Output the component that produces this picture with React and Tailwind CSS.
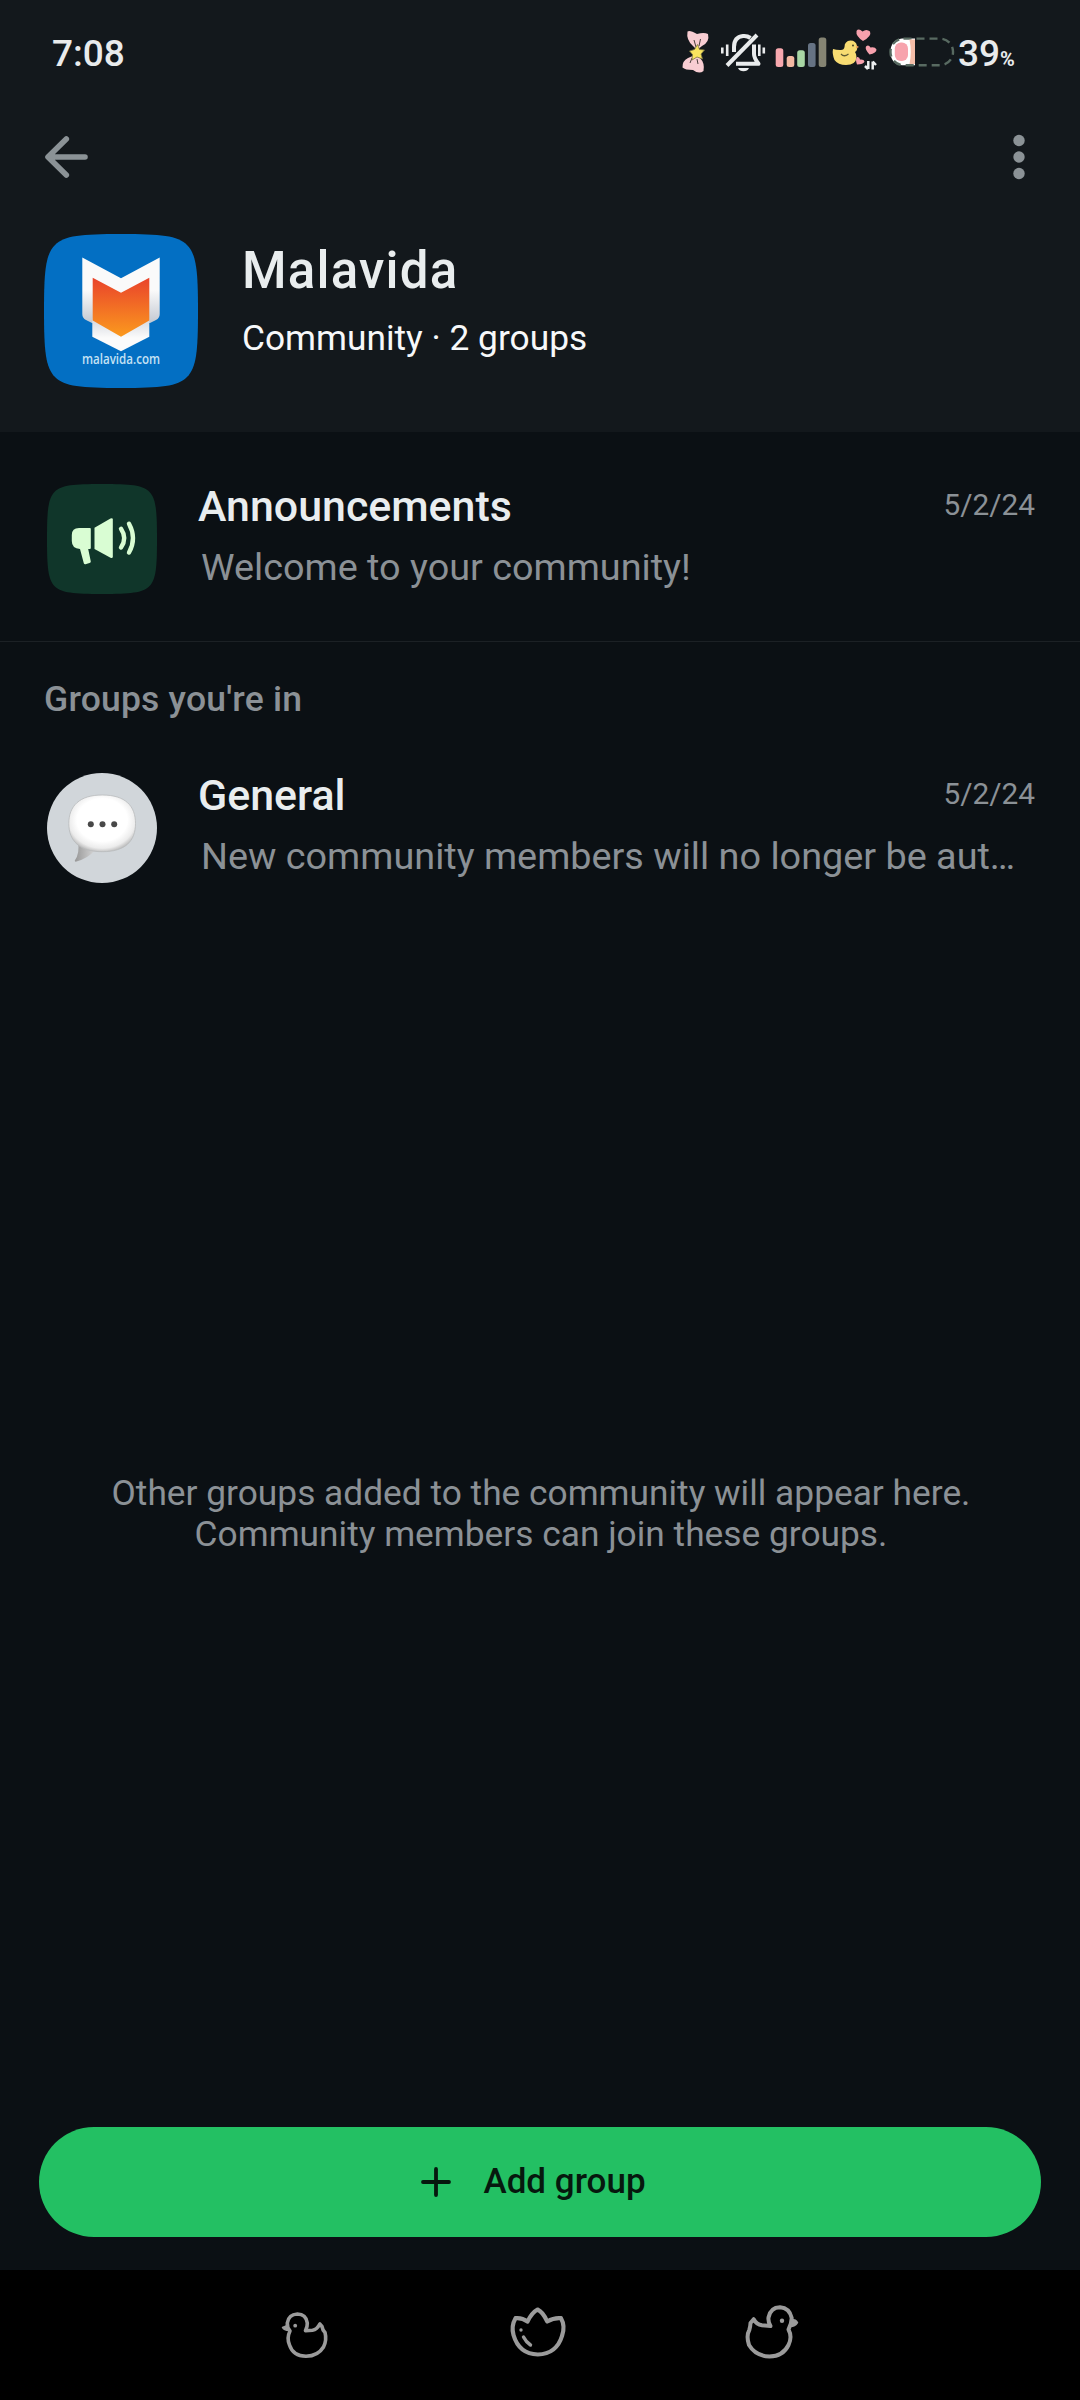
import { clsx } from 'clsx';

const BowIcon = () => (
    <svg width="38" height="106" viewBox="680 0 38 106" fill="none">
        <path d="M687.5 31.5 Q690 30 697 34 Q704 32 708 34 Q710 42 702 46 L697 50 L693 46 Q686 40 687.5 31.5Z" fill="#f8cdd2" />
        <path d="M695 55 L700 58 Q705 63 703.500 71 Q699 74.500 693 70 Q685 70 682.500 67.500 Q682 61 688 58Z" fill="#f8cdd2" />
        <path d="M694 40 L696 47 M700.500 39 L699 46 M692 58 L690 63 M697 59 L698 64" stroke="#4a3f3c" strokeWidth="1" />
        <path d="M697.500 44.500 L699.500 49.500 L704.500 50 L701 54 L702.500 59 L697 57 L692 60 L692.500 54.500 L689.500 51 L694.500 49.500Z" fill="#f9e45e" stroke="#7c7540" strokeWidth=".8" />
    </svg>
);

const BellOffIcon = () => (
    <svg width="54" height="106" viewBox="718 0 54 106" fill="none" stroke="#e9ebec" strokeWidth="4">
        <path d="M734 52 V47 Q734 37 743 36 Q747 35.500 750.500 38" />
        <path d="M754 44.500 V54 Q754 58 758.500 63.800 H736" strokeLinejoin="round" />
        <path d="M757 35 L727 65.500" />
        <path d="M738 68 H749 Q747.500 71.300 743.500 71.300 Q739.500 71.300 738 68Z" fill="#e9ebec" stroke="none" />
        <path d="M722.300 47.500 V53.500 M727.200 44.500 V56 M759.300 44.500 V56 M763.800 47.500 V53.500" strokeWidth="2.600" />
    </svg>
);

const signalBars = [
    { x: 775.7, y: 48.3, fill: '#f7a8ae' },
    { x: 786.7, y: 56, fill: '#f3b9a2' },
    { x: 797.2, y: 50.3, fill: '#a9d7a5' },
    { x: 808, y: 43, fill: '#667384' },
    { x: 818.7, y: 37.5, fill: '#858473' },
];

const SignalIcon = () => (
    <svg width="58" height="106" viewBox="772 0 58 106">
        {signalBars.map((b) => (
            <rect key={b.x} x={b.x} y={b.y} width="7.600" height={67 - b.y} rx="2.500" fill={b.fill} />
        ))}
    </svg>
);

const DuckHeartsIcon = () => (
    <svg width="55" height="106" viewBox="830 0 55 106">
        <path d="M833 49 Q832 54 834.500 60 Q838 65 846 65 Q856 65 856.500 57 Q856.500 54 855 52 Q858 50 857 46 Q856 40.500 850.500 40.500 Q844.500 41 844.500 47 Q844 50.500 840 50 Q836 50 833 49Z" fill="#f8dc72" />
        <path d="M841 54 Q844 57.500 848.500 54" fill="none" stroke="#5f5a33" strokeWidth="1.200" />
        <circle cx="853" cy="45.500" r=".9" fill="#3a3520" />
        <path d="M856.500 45.500 L859 47 L856 48.500Z" fill="#ee9a5b" />
        <g fill="#f7a1ad">
            <path d="M863 41 Q855.500 36 856.500 31 Q858.500 28 862.500 31.500 Q866.500 28.500 870 31.500 Q872 36 863 41Z" />
            <path d="M869.500 54.500 Q864.500 49 866 46.500 Q868.500 44 870.500 47.500 Q875 46.500 876.500 49.500 Q876.500 53 869.500 54.500Z" />
            <path d="M857 64.500 Q855 59 857 57 Q859.500 56.500 860 59.500 Q864 59 864.500 61.500 Q863.500 64.500 857 64.500Z" />
        </g>
        <path d="M868.300 61 V69 M865 66 L868 69 M872.700 69.500 V61.500 M872.700 61.500 L876 65" fill="none" stroke="#eceeef" strokeWidth="2.500" />
    </svg>
);

const BatteryIcon = () => (
    <svg width="71" height="106" viewBox="885 0 71 106" fill="none">
        <path d="M915 38.500 H902 Q890.500 40 890.500 52 Q890.500 64 902 65.200 H915Z" fill="#fff" />
        <rect x="890.500" y="38.600" width="62.500" height="26.600" rx="13" stroke="#586a61" strokeWidth="2.400" strokeDasharray="8 5" />
        <rect x="894.800" y="42.500" width="13.200" height="18.500" rx="6" fill="#f7a3ad" />
        <path d="M915 39.500 H909.500 Q912 52 909.500 64 H915Z" fill="#f5bda8" />
    </svg>
);

const StatusBar = () => (
    <div className="flex h-[106px] items-center text-[37px] font-medium text-[#e9ebec]">
        <span className="ml-[52px] flex-1 pt-px">7:08</span>
        <BowIcon />
        <BellOffIcon />
        <SignalIcon />
        <DuckHeartsIcon />
        <BatteryIcon />
        <div className="flex w-[124px] items-baseline pt-px pl-[2px]">
            <span>39</span>
            <span className="text-[20px] font-bold">%</span>
        </div>
    </div>
);

const Toolbar = () => (
    <div className="flex h-[102px] items-center justify-between pr-[51px] pl-[44px]">
        <svg width="46" height="46" viewBox="0 0 46 46" fill="none" stroke="#8b9296" strokeWidth="5.600" strokeLinecap="round" strokeLinejoin="round">
            <path d="M22.300 5 L4 23 L22.300 41 M5 23 H41" />
        </svg>
        <svg width="20" height="50" viewBox="0 0 20 50" fill="#8b9296">
            <circle cx="10" cy="8.500" r="5.700" />
            <circle cx="10" cy="25" r="5.700" />
            <circle cx="10" cy="41.500" r="5.700" />
        </svg>
    </div>
);

const MalavidaLogo = () => (
    <svg width="154" height="154" viewBox="44 234 154 154">
        <defs>
            <linearGradient id="shield" x1="0" y1="0" x2="0" y2="1">
                <stop offset="0" stopColor="#e9432b" />
                <stop offset="1" stopColor="#fb9a1e" />
            </linearGradient>
            <linearGradient id="wing" x1="0" y1="0" x2="0" y2="1">
                <stop offset=".5" stopColor="#fafafa" />
                <stop offset="1" stopColor="#c3c9d2" />
            </linearGradient>
            <linearGradient id="tip" x1="0" y1="0" x2="0" y2="1">
                <stop offset="0" stopColor="#d2d6de" />
                <stop offset=".6" stopColor="#fbfbfb" />
            </linearGradient>
        </defs>
        <path d="M121 234 C161 234 177.500 235.500 187 245 C196.500 254.500 198 271 198 311 C198 351 196.500 367.500 187 377 C177.500 386.500 161 388 121 388 C81 388 64.500 386.500 55 377 C45.500 367.500 44 351 44 311 C44 271 45.500 254.500 55 245 C64.500 235.500 81 234 121 234Z" fill="#036fc3" />
        <path d="M82.300 257.500 L121 278.300 L159.700 257.500 V314 Q159.700 318 156 320 L150 323 H92 L86 320 Q82.300 318 82.300 314Z" fill="url(#wing)" />
        <path d="M92.300 318 H149.300 V336.700 L121 351.300 L92.300 336.700Z" fill="url(#tip)" />
        <path d="M92.700 277.700 L121 292.700 L149.300 277.700 V320.500 L121 336.700 L92.700 320.500Z" fill="url(#shield)" />
        <text x="82" y="363.600" textLength="78" lengthAdjust="spacingAndGlyphs" fill="#c5e2f4" fontSize="14" fontWeight="600" fontFamily="Open Sans, sans-serif">malavida.com</text>
    </svg>
);

const MegaphoneAvatar = () => (
    <svg width="110" height="110" viewBox="47.500 484 110 110">
        <path d="M102.500 484 C131 484 143 485 149.800 491.700 C156.500 498.500 157.500 510.500 157.500 539 C157.500 567.500 156.500 579.500 149.800 586.300 C143 593 131 594 102.500 594 C74 594 62 593 55.200 586.300 C48.500 579.500 47.500 567.500 47.500 539 C47.500 510.500 48.500 498.500 55.200 491.700 C62 485 74 484 102.500 484Z" fill="#10362a" />
        <g fill="#d9fdd3">
            <path d="M79.500 528 H90.500 Q91.300 528 91.300 529 V548 Q91.300 549 90.300 549 H88.700 L91.300 561.500 Q91.300 562.700 90 563 L86 564.300 Q84.700 564.500 84.300 563.300 L80.500 549 Q72.300 548.500 72.300 541 V535 Q72.300 528 79.500 528Z" />
            <path d="M95 527.700 L111 518.500 Q113.300 517.500 113.300 519.500 V556.500 Q113.300 558.700 111 557.700 L95 549Z" />
        </g>
        <g fill="none" stroke="#d9fdd3" strokeWidth="4.400" strokeLinecap="round">
            <path d="M121.500 528.800 Q128 538.500 121.500 547.500" />
            <path d="M129.500 523.800 Q137.500 538.500 129.500 552.500" />
        </g>
    </svg>
);

const ChatAvatar = () => (
    <svg width="110" height="110" viewBox="47.500 773 110 110">
        <defs>
            <radialGradient id="bubble" cx=".5" cy=".44" r=".58">
                <stop offset=".65" stopColor="#fff" />
                <stop offset=".86" stopColor="#ececec" />
                <stop offset="1" stopColor="#b8b8b8" />
            </radialGradient>
            <linearGradient id="tail" x1="0" y1="0" x2="1" y2="0">
                <stop offset="0" stopColor="#979797" />
                <stop offset="1" stopColor="#d4d4d4" />
            </linearGradient>
        </defs>
        <circle cx="102.500" cy="828" r="55" fill="#d1d6da" />
        <path d="M78.500 842 Q80.500 853 75.300 860.500 Q75 862 77 861.500 Q89 858 95 850.500Z" fill="url(#tail)" />
        <path d="M102.700 795 C126 795 136 806 136 823.500 C136 841 126 851.700 102.700 851.700 C80 851.700 69.300 841 69.300 823.500 C69.300 806 80 795 102.700 795Z" fill="url(#bubble)" stroke="#b9bbbd" strokeWidth=".8" />
        <g fill="#484848">
            <circle cx="91.300" cy="824.300" r="3" />
            <circle cx="103" cy="824.300" r="3" />
            <circle cx="114.700" cy="824.300" r="3" />
        </g>
    </svg>
);

const GroupRow = ({ avatar, title, date, message, className }) => (
    <div className={clsx('flex pr-[45px] pl-[47px]', className)}>
        <div className="mt-[3px] shrink-0">{avatar}</div>
        <div className="ml-[41px] min-w-0 flex-1">
            <div className="flex h-[50px] justify-between">
                <h2 className="text-[42.9px] leading-[50px] font-medium text-[#e9edef]">{title}</h2>
                <span className="text-[29.8px] leading-[48px] text-[#8b9196]">{date}</span>
            </div>
            <p className="mt-[14px] ml-[3px] text-[37.8px] leading-[44px] whitespace-nowrap text-[#8b9196]">{message}</p>
        </div>
    </div>
);

const NavBar = () => (
    <div className="flex h-[130px] bg-black pt-[32px] pl-[275px]">
        <svg width="60" height="60" viewBox="275 2302 60 60" fill="none" stroke="#9b9b9b" strokeWidth="3.600" strokeLinejoin="round">
            <path d="M290 2331 Q286.500 2338 289.500 2345 Q293 2356 306 2356.300 Q318 2356 323.500 2347 Q327 2340 325 2332.500 Q322.500 2330 322 2326.500 L319.800 2324 Q317 2329.500 312.500 2330.200 L305.500 2330.700 Q307.500 2327 307.300 2323 Q306 2314 297.400 2314 Q288.500 2314.500 287.300 2323 Q287 2327.500 290 2331Z" />
            <path d="M287.500 2325.500 L282.500 2327.500 Q284 2330.500 289 2330.500Z" fill="#9b9b9b" strokeWidth="1.500" />
            <circle cx="295.200" cy="2325.700" r="1.900" fill="#9b9b9b" stroke="none" />
        </svg>
        <svg className="ml-[173px]" width="60" height="60" viewBox="508 2302 60 60" fill="none" stroke="#9b9b9b" strokeWidth="4.200" strokeLinejoin="round" strokeLinecap="round">
            <path d="M515.500 2318.200 Q511 2326 513.500 2335 Q519 2354 537.800 2354.500 Q556.500 2354 562 2336 Q565.500 2326 561 2318.200 Q554 2317.500 547.200 2321.500 Q543 2312 537.500 2309.500 Q532 2312.500 527.500 2321.500 Q522 2317.500 515.500 2318.200Z" />
            <path d="M521 2330 v.1 M523.500 2337 Q526 2342 530.500 2345" strokeWidth="3.400" />
        </svg>
        <svg className="ml-[174px]" width="60" height="60" viewBox="742 2302 60 60" fill="none" stroke="#9b9b9b" strokeWidth="4" strokeLinejoin="round">
            <path d="M788.500 2329.500 Q792.500 2337 788.500 2345 Q783 2356.300 769.500 2356.500 Q755.500 2356 749 2345 Q746 2336 749.300 2330 Q750.300 2327 750.500 2323 L753.700 2319.200 Q756.500 2324.500 762 2325.300 L770.500 2326 Q768 2322 768.500 2317.500 Q770.500 2307.500 780 2307.300 Q789.500 2308 791.700 2318 Q791.500 2324 788.500 2329.500Z" />
            <path d="M791.500 2319.500 Q796 2319.500 797.500 2322.500 Q795 2326.500 790.500 2326.500Z" fill="#9b9b9b" strokeWidth="1.500" />
            <circle cx="782" cy="2320.700" r="2.200" fill="#9b9b9b" stroke="none" />
        </svg>
    </div>
);

const App = () => {
    return (
        <div className="flex h-[2400px] w-[1080px] flex-col overflow-hidden bg-[#0b1014] font-['Roboto',sans-serif]">
            <header className="h-[432px] bg-[#13181c]">
                <StatusBar />
                <Toolbar />
                <div className="mt-[26px] flex pl-[44px]">
                    <MalavidaLogo />
                    <div className="ml-[44px] pt-[7px]">
                        <h1 className="text-[51px] leading-[60px] font-medium tracking-[1.2px] text-[#e9edee]">Malavida</h1>
                        <p className="mt-[16px] text-[35.3px] leading-[42px] text-[#f7f8fa]">Community · 2 groups</p>
                    </div>
                </div>
            </header>

            <GroupRow
                className="border-b border-[#1c2125] pt-[49px] pb-[47px]"
                avatar={<MegaphoneAvatar />}
                title="Announcements"
                date="5/2/24"
                message="Welcome to your community!"
            />
            <h3 className="pt-[36px] pl-[44px] text-[35.5px] leading-[42px] font-medium tracking-[0.2px] text-[#8b9196]">Groups you're in</h3>
            <GroupRow
                className="pt-[50px] pb-[16px]"
                avatar={<ChatAvatar />}
                title="General"
                date="5/2/24"
                message="New community members will no longer be aut…"
            />

            <div className="flex flex-1 items-center justify-center">
                <p className="pt-[2px] pl-[2px] text-center text-[35.3px] leading-[41px] text-[#8b9196]">
                    Other groups added to the community will appear here.
                    <br />
                    Community members can join these groups.
                </p>
            </div>

            <button className="mx-[39px] mb-[33px] flex h-[110px] shrink-0 items-center justify-center rounded-full bg-[#23c063] pr-[13px] text-[35px] font-medium text-[#06180e]">
                <svg className="mr-[32px]" width="30" height="30" viewBox="0 0 30 30" fill="none" stroke="#06180e" strokeWidth="3.800" strokeLinecap="round">
                    <path d="M15 2 V28 M2 15 H28" />
                </svg>
                <span className="pt-px">Add group</span>
            </button>
            <NavBar />
        </div>
    );
};

export default App;
